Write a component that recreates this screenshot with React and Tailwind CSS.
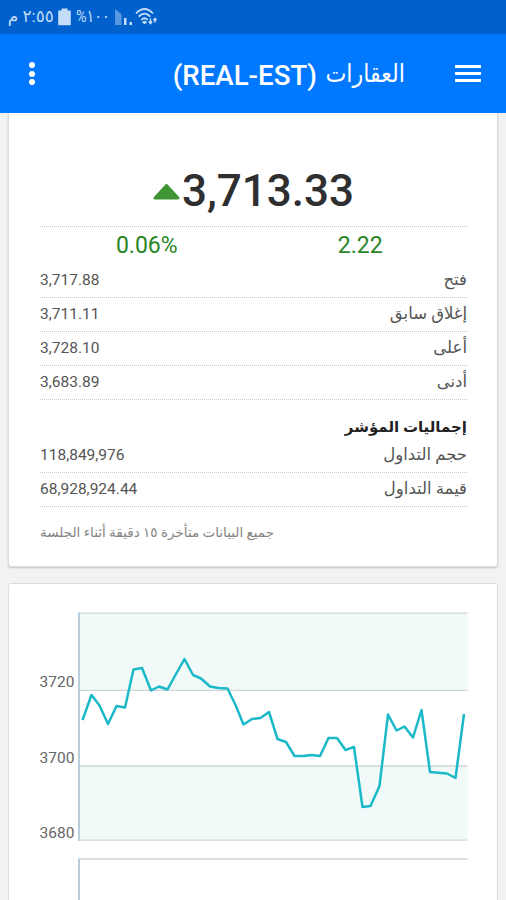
import React from 'react';

const prices = [
  { label: 'فتح', value: '3,717.88' },
  { label: 'إغلاق سابق', value: '3,711.11' },
  { label: 'أعلى', value: '3,728.10' },
  { label: 'أدنى', value: '3,683.89' },
];

const totals = [
  { label: 'حجم التداول', value: '118,849,976' },
  { label: 'قيمة التداول', value: '68,928,924.44' },
];

const linePoints = [
  [82.5, 720], [91.5, 695], [99.5, 705.5], [108, 724], [116.5, 706], [125, 707.5],
  [133.5, 669.5], [142, 668], [151, 690.5], [159, 686.5], [167.5, 689.5], [176, 674],
  [184.5, 659], [193, 675], [201, 678.5], [210, 686.5], [218.5, 688], [227.5, 688.5],
  [235.5, 705], [243.5, 724.5], [252, 719], [260.5, 718], [269, 712], [277.5, 739],
  [286, 742], [294.5, 756], [303, 756], [311.5, 755], [320, 756], [328.5, 738],
  [337, 738], [345.5, 750], [354, 747], [362.5, 807], [370.5, 806], [379.5, 786],
  [388, 714.5], [396.5, 730.5], [404.5, 726.5], [413, 737.5], [421.5, 710],
  [430, 772], [447, 773.5], [455.5, 778], [464, 714],
];

const StatusBar = () => (
  <div className="flex h-[34px] items-center bg-[#0060cc] pl-[8px] text-[#c4ddf8]">
    <span dir="rtl" className="w-[46px] whitespace-nowrap text-[17px]">٢:٥٥ م</span>
    <svg className="ml-[4px] h-[18px] w-[13px]" viewBox="0 0 13 18" fill="currentColor">
      <path d="M3.5 0.5h6v2h2.5a.8.8 0 0 1 .8.8v13.2a.8.8 0 0 1-.8.8H1a.8.8 0 0 1-.8-.8V3.300a.8.8 0 0 1 .8-.8h2.500z" />
    </svg>
    <span dir="ltr" className="ml-[5px] w-[33px] origin-left scale-x-85 whitespace-nowrap text-[17px]">%١٠٠</span>
    <svg className="ml-[6px] h-[18px] w-[18px]" viewBox="0 0 18 18" fill="currentColor">
      <path d="M0 1l6.500 5v11H0z" opacity="0.45" />
      <path d="M9 10h2.500v7H9zM14.500 14h2.500v3h-2.500z" />
    </svg>
    <svg className="ml-[2px] h-[20px] w-[24px]" viewBox="0 0 24 20" fill="none" stroke="currentColor" strokeWidth="1.800">
      <path d="M1 6.500q8.500-9 17 0M3.700 9.700q5.800-6 11.600 0M6.300 12.800q3.200-3.200 6.400 0" />
      <path d="M7.500 15q2-1.500 4 0l-2 2z" fill="currentColor" strokeWidth="1" />
      <path d="M15.500 11.500v5m-1.700-2l1.700 2 1.700-2M20 15.500v-4m-1.500 1.700l1.500-1.700 1.500 1.700" strokeWidth="1.500" />
    </svg>
  </div>
);

const Header = () => (
  <header dir="rtl" className="flex h-[79px] items-center bg-[#0078ff] px-[25px] text-white">
    <div className="flex w-[26px] flex-col gap-[4px]">
      <span className="h-[3px] bg-white" />
      <span className="h-[3px] bg-white" />
      <span className="h-[3px] bg-white" />
    </div>
    <h1 className="mr-[50px] flex items-center gap-[8px] whitespace-nowrap">
      <span className="w-[80px] origin-right scale-x-[0.89] text-[25px]">العقارات</span>
      <span dir="ltr" className="pt-[4px] text-[27.700px] font-medium">(REAL-EST)</span>
    </h1>
    <div className="mr-auto flex w-[13px] flex-col items-center gap-[2.500px]">
      <span className="size-[6px] rounded-full bg-white" />
      <span className="size-[6px] rounded-full bg-white" />
      <span className="size-[6px] rounded-full bg-white" />
    </div>
  </header>
);

const Row = ({ label, value }) => (
  <div className="flex h-[34px] items-center justify-between border-b border-dotted border-[#c8c8c8] text-[#555]">
    <span className="text-[16.500px]">{label}</span>
    <span dir="ltr" className="text-[15.500px]">{value}</span>
  </div>
);

const Chart = () => (
  <svg className="block h-[288px] w-[428px]" viewBox="40 612 428 288">
    <rect x="79" y="613" width="388.500" height="77" fill="#f1faf9" />
    <rect x="79" y="766" width="388.500" height="74" fill="#f1faf9" />
    <path d="M79 613.200H467.500M79 690.300H467.500M79 766H467.500M79 840.200H467.500M79 859H467.500" stroke="#d2d6d7" strokeWidth="1.300" />
    <path d="M79 612.500V841M79 858.500V900" stroke="#b3c8da" strokeWidth="1.800" />
    <g fill="#666" fontSize="15.500">
      <text x="39.500" y="687">3720</text>
      <text x="39.500" y="763">3700</text>
      <text x="39.500" y="837.500">3680</text>
    </g>
    <polyline
      points={linePoints.map((p) => p.join(',')).join(' ')}
      fill="none"
      stroke="#1bb9c7"
      strokeWidth="2.500"
      strokeLinejoin="round"
    />
  </svg>
);

const App = () => {
  return (
    <div className="h-[900px] w-[506px] overflow-hidden bg-[#f2f2f2] font-[Roboto,'DejaVu_Sans',sans-serif]">
      <StatusBar />
      <Header />

      <main dir="rtl" className="px-[8px]">
        {/* Index summary */}
        <section className="h-[454px] rounded-b-[3px] border border-t-0 border-[#dcdcdc] bg-white pl-[31px] pr-[30px] shadow-[0_1px_2px_rgba(0,0,0,0.2)]">
          <div dir="ltr" className="flex h-[114px] items-end justify-center border-b border-dotted border-[#c8c8c8] pb-[7px]">
            <svg className="mb-[19px] h-[16px] w-[27px]" viewBox="0 0 27 16">
              <path d="M13.500 1.500L25 14H2z" fill="#3f9433" stroke="#3f9433" strokeWidth="3" strokeLinejoin="round" />
            </svg>
            <span className="ml-[2px] text-[44px] font-medium leading-[56px] text-[#2f2f31]">3,713.33</span>
          </div>
          <div className="grid h-[37px] grid-cols-2 items-center pt-[2px] text-center text-[23px] text-[#2a8526]">
            <span>2.22</span>
            <span dir="ltr">0.06%</span>
          </div>
          {prices.map((row) => <Row key={row.label} {...row} />)}
          <h2 className="mt-[16px] h-[23px] text-[15px] font-bold leading-[23px] text-[#222]">إجماليات المؤشر</h2>
          {totals.map((row) => <Row key={row.label} {...row} />)}
          <p className="mt-[15px] text-left text-[13.500px] leading-[20px] text-[#858585]">
            جميع البيانات متأخرة ١٥ دقيقة أثناء الجلسة
          </p>
        </section>

        {/* Intraday chart */}
        <section dir="ltr" className="mt-[16px] h-[340px] rounded-t-[3px] border border-[#dcdcdc] bg-white pl-[31px] pt-[28px]">
          <Chart />
        </section>
      </main>
    </div>
  );
};

export default App;
